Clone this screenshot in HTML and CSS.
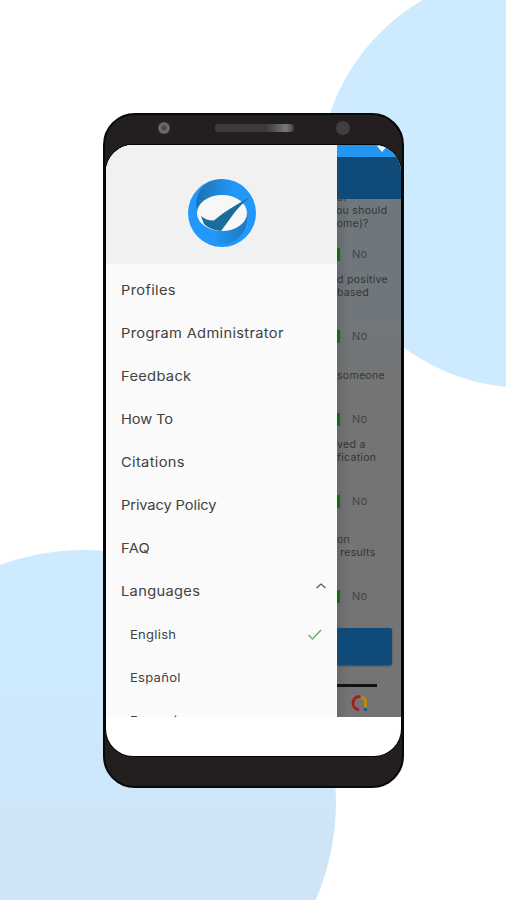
FILE: index.html
```
<!DOCTYPE html>
<html lang="en">
<head>
<meta charset="utf-8">
<title>Menu</title>
<link rel="stylesheet" href="styles.css">
</head>
<body>
<div class="stage">
  <div class="blob blob-top"></div>
  <div class="blob blob-bottom"></div>
  <div class="phone">
    <div class="bezel">
      <span class="camera"></span>
      <span class="speaker"></span>
      <span class="sensor"></span>
    </div>
    <div class="screen">
      <div class="app">
        <nav class="drawer">
          <div class="brand">
            <svg class="logo" width="70" height="70" viewBox="0 0 70 70">
              <defs>
                <linearGradient id="top" x1="0" x2="1"><stop offset="0" stop-color="#1c72ae"/><stop offset=".7" stop-color="#2299fa"/></linearGradient>
                <linearGradient id="low" x1="0" x2="1"><stop offset=".35" stop-color="#2299fa"/><stop offset="1" stop-color="#1c78ba"/></linearGradient>
              </defs>
              <circle cx="35" cy="35" r="34" fill="#2299fa"/>
              <path d="M10 33C7 20 13 8 24 3Q35 -1 48 4C58 9 62 14 64 20L56 30C52 14 18 12 10 33Z" fill="url(#top)"/>
              <path d="M60 34C62 50 54 64 37 66C23 67 10 60 7 49L14 43C24 58 52 56 60 34Z" fill="url(#low)"/>
              <ellipse cx="35" cy="35" rx="25" ry="18" fill="#f7f7f7"/>
              <path d="M14 38Q20 43 27 42.500Q31 39 38 34Q52 25 63 19Q52 28 45 38Q40 45 34 53Q23 52 17 46Z" fill="#1a6c99"/>
            </svg>
          </div>
          <ul class="menu">
            <li><span>Profiles</span></li>
            <li><span>Program Administrator</span></li>
            <li><span>Feedback</span></li>
            <li><span class="tight">How To</span></li>
            <li><span>Citations</span></li>
            <li><span class="tight">Privacy Policy</span></li>
            <li><span>FAQ</span></li>
            <li><span>Languages</span>
              <svg class="caret" width="12" height="8" viewBox="0 0 12 8"><path d="M1.500 6L6 2L10.500 6" fill="none" stroke="#555" stroke-width="1.200"/></svg>
            </li>
            <li class="sub"><span>English</span>
              <svg class="tick" width="16" height="13" viewBox="0 0 16 13"><path d="M1.500 7L5.500 11L14 2" fill="none" stroke="#5bb563" stroke-width="1.400"/></svg>
            </li>
            <li class="sub"><span>Español</span></li>
            <li class="sub last"><span>Français</span></li>
          </ul>
        </nav>
        <div class="page">
          <div class="status"><svg width="10" height="7" viewBox="0 0 10 7"><path d="M0 1Q5 -1 10 1L5 7Z" fill="#fff"/></svg></div>
          <div class="toolbar"></div>
          <div class="survey">
            <div class="question q1"><p><span>&nbsp; or</span><br><span>you should</span><br><span>home)?</span></p><div class="answer"><i></i>No</div></div>
            <div class="question q2"><p><span>d positive</span><br><span>based</span></p><div class="answer"><i></i>No</div></div>
            <div class="question q3"><p><span>someone</span></p><div class="answer"><i></i>No</div></div>
            <div class="question q4"><p><span>ved a</span><br><span>fication</span></p><div class="answer"><i></i>No</div></div>
            <div class="question q5"><p><span>on</span><br><span>&nbsp;results</span></p><div class="answer"><i></i>No</div></div>
            <div class="submit"></div>
            <div class="rule"></div>
            <svg class="ad" width="18" height="18" viewBox="0 0 18 18" fill="none" stroke-linecap="round" stroke-width="3">
              <path d="M9 2.500Q15.500 3 15.500 9V13" stroke="#b98a0c"/>
              <path d="M8 15.500A6.600 6.600 0 0 1 9.500 2.500" stroke="#a51f1f"/>
              <circle cx="15.500" cy="15.500" r="1.800" fill="#2451a5" stroke="none"/>
            </svg>
          </div>
        </div>
      </div>
    </div>
  </div>
</div>
</body>
</html>
```
FILE: styles.css
```
* { box-sizing: border-box; }
body { margin: 0; background: #fff; font-family: Inter, "Liberation Sans", sans-serif; }
.stage { position: relative; width: 506px; height: 900px; overflow: hidden; padding: 113px 0 0 103px; }
.blob { position: absolute; border-radius: 50%; }
.blob-top { left: 319px; top: -28px; width: 416px; height: 416px; background: #cdeaff; }
.blob-bottom { left: -166px; top: 550px; width: 502px; height: 502px; background: linear-gradient(#cdeaff 0, #cdeaff 20%, #cfe5f7 60%, #cfe5f7); }
.phone { position: relative; width: 301px; height: 675px; border-radius: 32px; background: #231f20; border: 2px solid #080808; padding: 0 1px; }
.bezel { height: 30px; display: flex; align-items: center; padding: 0 51px 4px 52px; }
.camera { width: 12px; height: 12px; border-radius: 50%; background: radial-gradient(#484848 0 20%, #707070 45%, #555 75%); }
.speaker { width: 79px; height: 8px; margin-left: 45px; border-radius: 4px; background: linear-gradient(90deg, #3c3a3b 65%, #777 90%, #444); }
.sensor { width: 14px; height: 14px; margin-left: auto; border-radius: 50%; background: #403e3f; }
.screen { height: 611px; border-radius: 27px; overflow: hidden; background: #fff; box-shadow: 0 0 0 1px #050505; }
.app { display: flex; height: 572px; overflow: hidden; }
.drawer { width: 231px; flex: none; background: #fafafa; overflow: hidden; }
.brand { height: 119px; background: #f1f1f1; display: flex; align-items: center; justify-content: center; padding: 16px 0 0 1px; }
.menu { list-style: none; margin: 0; padding: 4.5px 0 0 15px; color: #414141; font-size: 13.5px; letter-spacing: .3px; }
.menu li { height: 43px; display: flex; align-items: center; white-space: nowrap; }
.menu span { transform: scaleX(1.085); transform-origin: left; }
.menu .tight { letter-spacing: -.1px; }
.menu .sub { padding-left: 9px; font-size: 12px; letter-spacing: .25px; }
.menu .last { padding-top: 1px; }
.caret { margin: 0 10px 11px auto; }
.tick { margin: 1px 14px 0 auto; }
.page { flex: 1; overflow: hidden; background: #747474; }
.status { height: 12px; background: #2196f3; padding-left: 40px; }
.status svg { display: block; }
.toolbar { height: 42px; background: #104a79; }
.survey { height: 518px; background: linear-gradient(90deg, #5556 0, transparent 12px), linear-gradient(#6f777c 0, #6f777c 110px, #747474 180px); color: #343434; font-size: 10.5px; line-height: 13px; letter-spacing: .3px; }
.question { display: flex; flex-direction: column; justify-content: space-between; overflow: hidden; }
.question p { margin: 0; white-space: nowrap; }
.q1 { height: 62px; }
.q1 p { margin-top: -8px; margin-left: -7px; }
.q2 { height: 82px; padding-top: 12px; }
.q3 { height: 83px; padding-top: 26px; }
.q4 { height: 82px; padding-top: 12px; }
.q5 { height: 95px; padding-top: 25px; }
.answer { height: 14px; display: flex; align-items: center; gap: 12px; font-size: 11px; color: #454545; }
.answer i { width: 3px; height: 13px; background: #08700c; }
.submit { width: 55px; height: 37px; margin-top: 25px; border-radius: 0 2px 2px 0; background: #104a79; box-shadow: 0 1px 2px #444; }
.rule { width: 40px; height: 3px; margin-top: 19px; background: #111; }
.ad { display: block; margin: 7px 0 0 13px; }
```
